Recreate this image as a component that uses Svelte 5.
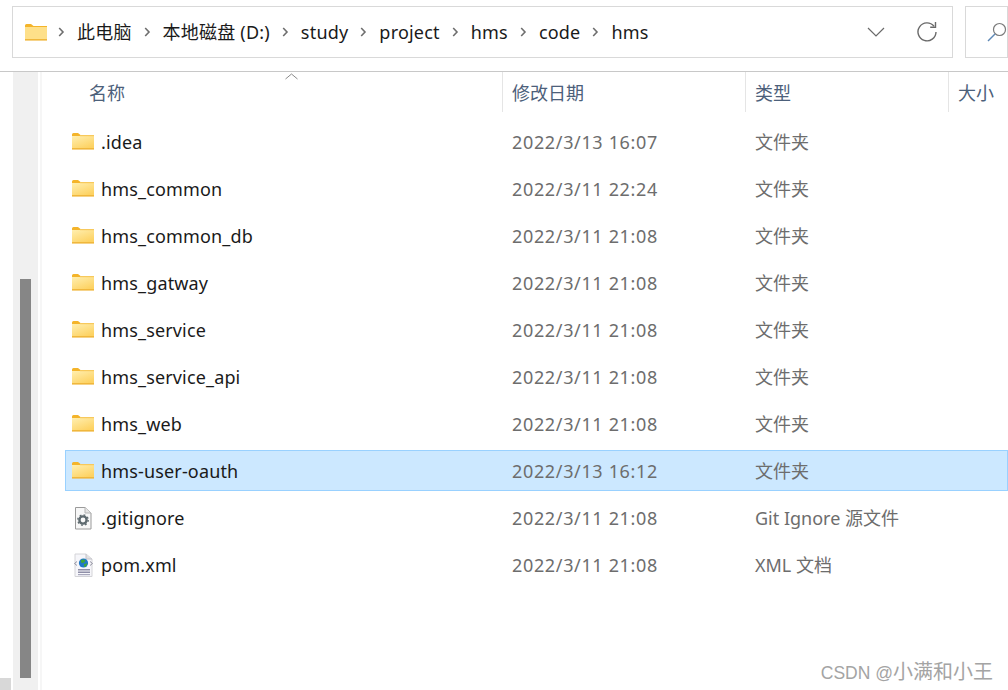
<script>
  const crumbs = ['此电脑', '本地磁盘 (D:)', 'study', 'project', 'hms', 'code', 'hms'];
  const rows = [
    { name: '.idea', date: '2022/3/13 16:07', type: '文件夹', icon: 'folder' },
    { name: 'hms_common', date: '2022/3/11 22:24', type: '文件夹', icon: 'folder' },
    { name: 'hms_common_db', date: '2022/3/11 21:08', type: '文件夹', icon: 'folder' },
    { name: 'hms_gatway', date: '2022/3/11 21:08', type: '文件夹', icon: 'folder' },
    { name: 'hms_service', date: '2022/3/11 21:08', type: '文件夹', icon: 'folder' },
    { name: 'hms_service_api', date: '2022/3/11 21:08', type: '文件夹', icon: 'folder' },
    { name: 'hms_web', date: '2022/3/11 21:08', type: '文件夹', icon: 'folder' },
    { name: 'hms-user-oauth', date: '2022/3/13 16:12', type: '文件夹', icon: 'folder', selected: true },
    { name: '.gitignore', date: '2022/3/11 21:08', type: 'Git Ignore 源文件', icon: 'git' },
    { name: 'pom.xml', date: '2022/3/11 21:08', type: 'XML 文档', icon: 'xml' }
  ];
</script>

{#snippet folder()}
  <svg class="ficon" width="22" height="17" viewBox="0 0 22 17">
    <defs>
      <linearGradient id="fg" x1="0" y1="0" x2="0.6" y2="1">
        <stop offset="0" stop-color="#ffefb0" />
        <stop offset="1" stop-color="#fdd262" />
      </linearGradient>
    </defs>
    <path d="M0 1.5 Q0 0 1.5 0 H6 L8.5 2 H22 V4 H0 Z" fill="#f4b42a" />
    <rect x="0" y="3" width="22" height="13" fill="url(#fg)" />
    <rect x="0" y="15" width="22" height="1.6" fill="#f0b73c" />
    <rect x="8" y="2" width="14" height="1.2" fill="#f7c95c" />
  </svg>
{/snippet}

{#snippet gitFile()}
  <svg class="ficon" width="22" height="24" viewBox="0 0 22 24">
    <path d="M3.5 1.5 H13 L19 7 V23 H3.5 Z" fill="#f7f7f7" stroke="#9a9a9a" />
    <path d="M13 1.5 V7 H19" fill="#e4e4e4" stroke="#b5b5b5" />
    <circle cx="11" cy="14" r="3.6" fill="none" stroke="#5f6b70" stroke-width="2.4" />
    <circle cx="11" cy="14" r="5.2" fill="none" stroke="#5f6b70" stroke-width="1.4" stroke-dasharray="1.8 2.28" />
  </svg>
{/snippet}

{#snippet xmlFile()}
  <svg class="ficon" width="22" height="24" viewBox="0 0 22 24">
    <path d="M3 1 H14 L20 6 V23.5 H3 Z" fill="#f6f6fa" stroke="#d4d4d8" />
    <path d="M14 1 V6 H20" fill="#e0e0e4" stroke="#c4c4c8" />
    <path d="M5 8.5 L2.5 10.5 L5 12.5 M18 8.5 L20.5 10.5 L18 12.5" fill="none" stroke="#8a8a9a" stroke-width="0.9" />
    <circle cx="11.5" cy="10" r="4.6" fill="#1f78c8" />
    <path d="M9 7 Q12 6 13.5 7.5 Q12 10.5 10 10 Q8.2 9.5 9 7 Z M12 11 L15.5 10.2 L13.5 14 L12 13.5 Z" fill="#3fa53a" />
    <rect x="6" y="16" width="12" height="1.5" fill="#8f8fa8" />
    <rect x="6" y="18.5" width="12" height="1.5" fill="#8f8fa8" />
    <rect x="6" y="21" width="12" height="1.2" fill="#a8a8bc" />
  </svg>
{/snippet}

<div class="window">
  <header class="toolbar">
    <div class="address">
      <div class="crumbs">
        <svg class="addr-folder" width="22" height="17" viewBox="0 0 22 17">
          <path d="M0 1.5 Q0 0 1.5 0 H6 L8.5 2 H22 V4 H0 Z" fill="#f4b42a" />
          <rect x="0" y="3" width="22" height="13" fill="#fee08a" />
          <rect x="0" y="15" width="22" height="1.6" fill="#f0b73c" />
        </svg>
        {#each crumbs as c}
          <svg class="sep" width="7" height="10" viewBox="0 0 7 10"><path d="M1.2 1 L5 5 L1.2 9" fill="none" stroke="#6e6e6e" stroke-width="1.6" /></svg>
          <span class="crumb">{c}</span>
        {/each}
      </div>
      <div class="addr-actions">
        <svg width="18" height="10" viewBox="0 0 18 10"><path d="M1 1 L9 9 L17 1" fill="none" stroke="#6a6a6a" stroke-width="1.2" /></svg>
        <svg width="22" height="22" viewBox="0 0 22 22"><path d="M18 5.2 A9 9 0 1 0 20 11" fill="none" stroke="#6a6a6a" stroke-width="1.4" /><path d="M19.5 1 V6.2 H14.2" fill="none" stroke="#6a6a6a" stroke-width="1.4" /></svg>
      </div>
    </div>
    <div class="search">
      <svg width="20" height="20" viewBox="0 0 20 20"><circle cx="12.5" cy="7.5" r="6" fill="none" stroke="#7a7a7a" stroke-width="1.2" /><path d="M8 12 L1 19" stroke="#5d87b5" stroke-width="1.5" /></svg>
    </div>
  </header>

  <div class="body">
    <aside class="gutter">
      <div class="track"><div class="thumb"></div></div>
      <div class="corner"></div>
    </aside>
    <main class="content">
      <div class="columns">
        <svg class="sort" width="13" height="7" viewBox="0 0 13 7"><path d="M0.5 6 L6.5 1 L12.5 6" fill="none" stroke="#8a8a8a" /></svg>
        <div class="col c-name">名称</div>
        <div class="col c-date">修改日期</div>
        <div class="col c-type">类型</div>
        <div class="col c-size">大小</div>
      </div>
      <div class="rows">
        {#each rows as r}
          <div class="row" class:selected={r.selected}>
            <div class="name">
              <span class="icon">
                {#if r.icon === 'folder'}{@render folder()}{:else if r.icon === 'git'}{@render gitFile()}{:else}{@render xmlFile()}{/if}
              </span>
              <span class="label">{r.name}</span>
            </div>
            <div class="meta date">{r.date}</div>
            <div class="meta type">{r.type}</div>
          </div>
        {/each}
      </div>
    </main>
  </div>
  <div class="mark"><span class="mark-latin">CSDN @</span>小满和小王</div>
</div>

<style>
  :global(body) { margin: 0; background: #fff; }
  .window {
    position: relative;
    width: 1008px;
    height: 690px;
    overflow: hidden;
    background: #fff;
    font-family: "Noto Sans", "Noto Sans CJK SC", sans-serif;
    font-size: 18px;
    color: #1a1a1a;
    display: flex;
    flex-direction: column;
  }
  .toolbar {
    flex: none;
    border-bottom: 1px solid #c8c8c8;
    display: flex;
    gap: 12px;
    padding-left: 12px;
    padding-top: 6px;
    box-sizing: border-box;
    height: 72px;
  }
  .address, .search {
    height: 52px;
    box-sizing: border-box;
    border: 1px solid #d9d9d9;
    display: flex;
    align-items: center;
  }
  .address {
    width: 941px;
    flex: none;
    justify-content: space-between;
    padding: 0 14px 0 12px;
  }
  .search { flex: 1; padding-left: 21px; }
  .crumbs { display: flex; align-items: center; }
  .addr-folder { margin-right: 11px; }
  .sep { margin-right: 12px; }
  .crumb { margin-right: 12px; line-height: 26px; white-space: nowrap; letter-spacing: 0.2px; }
  .addr-actions { display: flex; align-items: center; gap: 31px; }
  .body { flex: 1; display: flex; min-height: 0; }
  .gutter {
    width: 42px;
    flex: none;
    position: relative;
    background: linear-gradient(to right, #fff 0 13px, #f0f0f0 13px 38px, #fff 38px 40px, #f6f6f6 40px 42px);
  }
  .track { height: 100%; padding: 207px 0 0 20px; box-sizing: border-box; }
  .thumb { width: 11px; height: 399px; background: #868686; }
  .corner { position: absolute; left: 0; bottom: 0; width: 11px; height: 12px; background: #d8d8d8; }
  .content { flex: 1; min-width: 0; position: relative; padding-left: 23px; }
  .columns {
    height: 40px;
    display: grid;
    grid-template-columns: 438px 243px 203px 1fr;
    color: #4c607a;
  }
  .sort { position: absolute; left: 243px; top: 1px; }
  .col { display: flex; align-items: center; padding-left: 9px; padding-bottom: 1px; box-sizing: border-box; border-right: 1px solid #e5e5e5; }
  .c-name { padding-left: 24px; }
  .c-size { border: 0; padding-left: 9px; }
  .rows { padding-top: 9px; display: flex; flex-direction: column; gap: 6px; }
  .row {
    height: 41px;
    box-sizing: border-box;
    display: grid;
    grid-template-columns: 438px 243px 1fr;
    align-items: center;
    border: 1px solid transparent;
    white-space: nowrap;
  }
  .row.selected { background: #cce8ff; border-color: #99d1ff; }
  .name { display: flex; align-items: center; padding-left: 6px; }
  .icon { width: 29px; display: flex; align-items: center; flex: none; }
  .label { letter-spacing: 0.15px; }
  .ficon { display: block; }
  .meta { padding-left: 8px; color: #6d6d6d; }
  .type { position: relative; top: -1px; }
  .date { padding-left: 8px; letter-spacing: 0.65px; }
  .mark {
    position: absolute;
    right: 15px;
    bottom: 5px;
    color: #a4a4a4;
    font-size: 20px;
    white-space: nowrap;
    font-family: "Liberation Sans", "Noto Sans CJK SC", sans-serif;
  }
  .mark-latin { font-size: 17.5px; }
</style>
